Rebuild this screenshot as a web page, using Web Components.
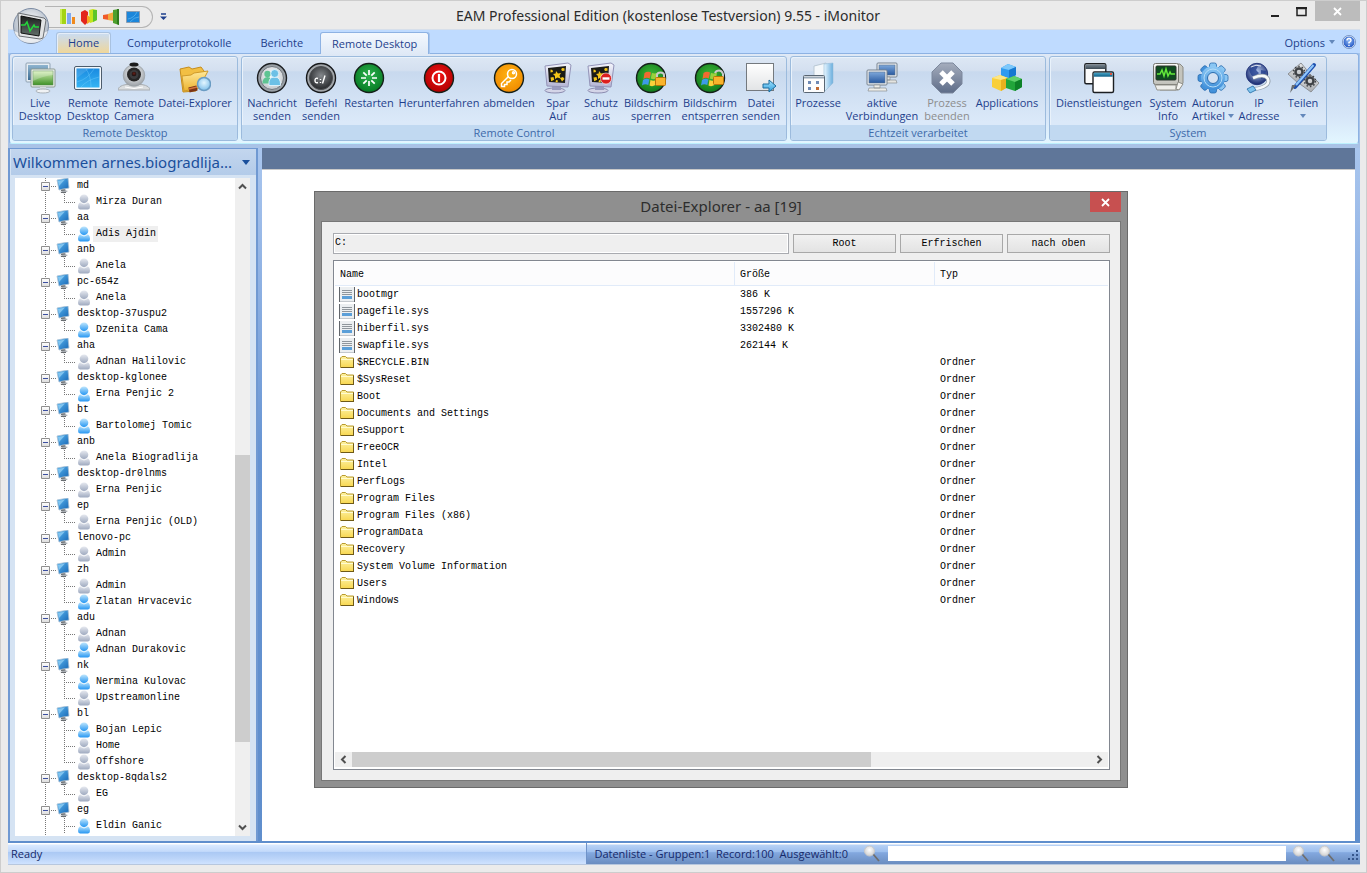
<!DOCTYPE html>
<html lang="de">
<head>
<meta charset="utf-8">
<title>EAM Professional Edition - iMonitor</title>
<style>
html, body { margin: 0; height: 100%; }
body { font: 11px/13px "Open Sans", "Noto Sans", sans-serif; color: #1e3f8c; background: #ebebeb; overflow: hidden; }
</style>
</head>
<body>
<app-window>
  <title-bar slot="title" text="EAM Professional Edition (kostenlose Testversion) 9.55 - iMonitor"></title-bar>
  <ribbon-tabs slot="tabs"></ribbon-tabs>
  <ribbon-bar slot="ribbon">
    <ribbon-group label="Remote Desktop">
      <ribbon-button icon="live" label="Live|Desktop" style="width:48px"></ribbon-button>
      <ribbon-button icon="rdesk" label="Remote|Desktop" style="width:48px"></ribbon-button>
      <ribbon-button icon="camera" label="Remote|Camera" style="width:44px"></ribbon-button>
      <ribbon-button icon="find" label="Datei-Explorer" style="width:78px"></ribbon-button>
    </ribbon-group>
    <ribbon-group label="Remote Control">
      <ribbon-button icon="msg" label="Nachricht|senden" style="width:54px"></ribbon-button>
      <ribbon-button icon="cmd" label="Befehl|senden" style="width:44px"></ribbon-button>
      <ribbon-button icon="restart" label="Restarten" style="width:52px"></ribbon-button>
      <ribbon-button icon="power" label="Herunterfahren" style="width:88px"></ribbon-button>
      <ribbon-button icon="key" label="abmelden" style="width:52px"></ribbon-button>
      <ribbon-button icon="saver" label="Spar|Auf" style="width:46px"></ribbon-button>
      <ribbon-button icon="saveroff" label="Schutz|aus" style="width:40px"></ribbon-button>
      <ribbon-button icon="lock" label="Bildschirm|sperren" style="width:60px"></ribbon-button>
      <ribbon-button icon="unlock" label="Bildschirm|entsperren" style="width:58px"></ribbon-button>
      <ribbon-button icon="send" label="Datei|senden" style="width:44px"></ribbon-button>
    </ribbon-group>
    <ribbon-group label="Echtzeit verarbeitet">
      <ribbon-button icon="proc" label="Prozesse" style="width:48px"></ribbon-button>
      <ribbon-button icon="net" label="aktive|Verbindungen" style="width:80px"></ribbon-button>
      <ribbon-button icon="stop" label="Prozess|beenden" disabled style="width:50px"></ribbon-button>
      <ribbon-button icon="apps" label="Applications" style="width:70px"></ribbon-button>
    </ribbon-group>
    <ribbon-group label="System">
      <ribbon-button icon="serv" label="Dienstleistungen" style="width:92px"></ribbon-button>
      <ribbon-button icon="info" label="System|Info" style="width:46px"></ribbon-button>
      <ribbon-button icon="gear" label="Autorun|Artikel" menu style="width:44px"></ribbon-button>
      <ribbon-button icon="ip" label="IP|Adresse" style="width:48px"></ribbon-button>
      <ribbon-button icon="share" label="Teilen|" menu style="width:40px"></ribbon-button>
    </ribbon-group>
  </ribbon-bar>
  <side-panel slot="side" heading="Wilkommen arnes.biogradlija..."></side-panel>
  <work-area slot="work">
    <file-dialog heading="Datei-Explorer - aa [19]"></file-dialog>
  </work-area>
  <status-bar slot="status"></status-bar>
</app-window>

<script>
const svg = (w, h, body, vb) => `<svg width="${w}" height="${h}" viewBox="${vb || `0 0 ${w} ${h}`}" aria-hidden="true">${body}</svg>`;
const lin = (id, a, b, dir = 'x2="0" y2="1"') => `<linearGradient id="${id}" x1="0" y1="0" ${dir}><stop offset="0" stop-color="${a}"/><stop offset="1" stop-color="${b}"/></linearGradient>`;
const rad = (id, a, b) => `<radialGradient id="${id}" cx=".5" cy=".4" r=".6"><stop offset="0" stop-color="${a}"/><stop offset="1" stop-color="${b}"/></radialGradient>`;
const disc = (a, b) => rad('g', a, b) + `<circle cx="16" cy="16" r="14.5" fill="url(#g)" stroke="#15201a" stroke-width="1.4"/>`;
const monitorStars = `${lin('m', '#f4f5fc', '#b4b4d4')}
  <ellipse cx="13" cy="28.500" rx="10" ry="2.500" fill="#d4d5e8" stroke="#8c8cb0"/><path d="M10 24h9v4h-9z" fill="#9a9cc0"/>
  <path d="M3 4l23-3 3 2-3 22-21-1z" fill="url(#m)" stroke="#9394b8"/><path d="M6 6l18-2-1 17-16-1z" fill="#1b1b16"/>
  <g fill="#f5c518"><path d="M14 9l2 2.500 3-.5-1.500 2.500 1 3-3-1-2.500 1.500v-3l-2-2 2.700-.5z"/><path d="M20 6l2.500.3v2.400l-2.500.3-.8-1.500zM8.500 7.500l2 .5.5 2-2.500.5zM8.500 15.500l3-.5.7 2.700-3 1.600zM18 16l3-1 1.500 2-2.500 2.500zM14 18l2 .5-.5 1.700h-2z"/></g>`;
const winFlag = `<path d="M9.500 11q3-2 6.500-.5l-1.300 6q-3.200-1.500-6.200.5z" fill="#f26a30"/><path d="M17 11q3 1 6-.5l-1 6q-3 1.500-6.200 0z" fill="#9ad13c"/><path d="M8 18q3-2 6.300-.5l-1 5.500q-3.300-1.500-6.300.5z" fill="#3e9ae8"/><path d="M15.500 18q3 1.500 6 0l-1 5q-3 2-6 .5z" fill="#fbd13a"/>`;
const screen = (x, y, w, h) => `<rect x="${x}" y="${y}" width="${w}" height="${h}" rx="1" fill="#eceff2" stroke="#76828e"/><rect x="${x + 2}" y="${y + 2}" width="${w - 4}" height="${h - 4}" fill="url(#s)" stroke="#5a7391" stroke-width=".6"/>`;

const ICONS = {
  live: lin('a', '#8fb4cf', '#3b6b92') + lin('b', '#d4efb4', '#3f9126') +
    `<rect x="2" y="1" width="24" height="19" rx="1" fill="#e6edf3" stroke="#8fa2b3"/><rect x="4" y="3" width="20" height="15" fill="url(#a)"/>
     <rect x="7" y="7" width="24" height="18" rx="1" fill="#eef2ee" stroke="#8c9a92"/><rect x="9" y="9" width="20" height="14" fill="url(#b)" stroke="#5c8d52" stroke-width=".6"/><path d="M9 9h20v4q-10 1-20 6z" fill="#fff" opacity=".25"/>
     <path d="M16 25h6v3h-6z" fill="#d6dade"/><ellipse cx="19" cy="29" rx="7" ry="2" fill="#f0f2f4" stroke="#aab2ba"/>`,
  rdesk: lin('a', '#1a8ae0', '#35b4f4') +
    `<rect x="2.500" y="4.500" width="27" height="23" rx="1.500" fill="#f4f8fb" stroke="#4d5c6c"/><rect x="4.500" y="6.500" width="23" height="19" fill="url(#a)"/>
     <path d="M5 20Q16 17 22 7M9 25Q15 18 27 15M19 25Q19 14 14 7" fill="none" stroke="#7fd3ff" opacity=".35"/><path d="M5 7h12L5 16z" fill="#fff" opacity=".12"/>`,
  camera: rad('a', '#ffffff', '#9aa0a6') + rad('b', '#6a2018', '#101010') +
    `<path d="M0 28q0-4 8-5.500h16q8 1.500 8 5.500z" fill="#d9dcde" stroke="#a9aeb2"/><path d="M7 25q9 3 18 0" stroke="#fff" fill="none"/><circle cx="16" cy="13.500" r="10.800" fill="url(#a)" stroke="#9aa0a5" stroke-width=".7"/>
     <circle cx="16" cy="12.500" r="7" fill="#262626"/><circle cx="16" cy="12.500" r="4.500" fill="#3b3b3d"/><circle cx="16" cy="12" r="2.300" fill="url(#b)"/><ellipse cx="16" cy="2.500" rx="4.500" ry="2" fill="#1b1b1b"/>`,
  find: lin('a', '#ffe999', '#edb32f') + rad('b', '#e4f6ff', '#7fc0ea') +
    `<path d="M1 7l9-2 3 2 9-2 3 4v4l-8 16-13 1z" fill="#f2bf43" stroke="#c58d1e"/><path d="M3 14l9-1 3-2 14-2-9 17-15 3z" fill="url(#a)" stroke="#cf9a2a"/>
     <path d="M10 28l8-2" stroke="#7b3516" stroke-width="5"/><path d="M10 27l8-2" stroke="#d3743a" stroke-width="1.500"/><circle cx="25" cy="22" r="6.500" fill="url(#b)" stroke="#6a9cc3" stroke-width="1.500"/>`,
  msg: rad('a', '#ffffff', '#c4c9cd') +
    `<circle cx="16" cy="16" r="14.500" fill="#9aa0a6" stroke="#1c1f22" stroke-width="1.400"/><circle cx="16" cy="16" r="11.500" fill="url(#a)" stroke="#6e757c"/>
     <g fill="#5ec492"><circle cx="11.500" cy="12" r="3.200"/><path d="M6.500 21.500q0-6.500 5-6.500t4.500 6.500z"/></g><g fill="#6cc0e6" stroke="#e9f8ff" stroke-width=".8"><path d="M13 23.500q-1-8.500 5.500-8.500t6 8.500z"/><circle cx="18.700" cy="11.500" r="4"/></g>`,
  cmd: rad('a', '#85898d', '#26282b') +
    `<circle cx="16" cy="16" r="14.500" fill="#a2a6aa" stroke="#16181a" stroke-width="1.400"/><circle cx="16" cy="16" r="11.500" fill="url(#a)" stroke="#4a4d50"/>
     <path d="M13 16.500q-3-1-3 2t3 2M15.500 17v1M15.500 20v1M17.500 21.500l2.500-8" stroke="#fff" stroke-width="1.400" fill="none"/>`,
  restart: disc('#2db14c', '#067a24') +
    `<g stroke="#fff" stroke-width="1.700"><path d="M16 8v5M16 19v5M8 16h5M19 16h5M10.300 10.300l3.400 3.400M18.300 18.300l3.400 3.400M21.700 10.300l-3.400 3.400M13.700 18.300l-3.400 3.400"/></g>`,
  power: disc('#f01414', '#b00000') + `<circle cx="16" cy="16" r="6.500" fill="none" stroke="#fff" stroke-width="2"/><path d="M16 12v8" stroke="#fff" stroke-width="2.200"/>`,
  key: disc('#ffb413', '#f08a00') +
    `<g fill="none" stroke="#fff" stroke-width="1.500"><circle cx="19" cy="12" r="4.500"/><circle cx="20.500" cy="10.800" r="1"/><path d="M15.500 14.500l-7 7v3h3v-2h2.500v-2.500h2l2-2"/></g>`,
  saver: monitorStars,
  saveroff: monitorStars + `<circle cx="21" cy="16.500" r="5.500" fill="#dd1f1f" stroke="#fff" stroke-width=".6"/><path d="M17.500 16.500h7" stroke="#fff" stroke-width="2.400"/>`,
  lock: disc('#3db838', '#117a1c') + winFlag + `<path d="M22 16v-3q0-2.500 3.500-2.500t3.500 2.500v3" fill="none" stroke="#c9c9c9" stroke-width="2"/><rect x="20.500" y="15.500" width="10" height="8" rx="1" fill="#f9b42c" stroke="#b87508"/>`,
  unlock: disc('#3db838', '#117a1c') + winFlag + `<path d="M21 11q1-2.500 4-2.500t4 3.500v4" fill="none" stroke="#c9c9c9" stroke-width="2"/><rect x="19.500" y="14.500" width="10" height="8" rx="1" fill="#f9b42c" stroke="#b87508"/>`,
  send: lin('a', '#ffffff', '#e2e4e6') + lin('b', '#a5e3ff', '#2f9fdd') +
    `<rect x="1.500" y="1.500" width="27" height="27" fill="url(#a)" stroke="#74797e"/><path d="M18 22h6v-4l7 6-7 6v-4h-6z" fill="url(#b)" stroke="#1c6c9e"/>`,
  proc: lin('a', '#e8f6ff', '#6aaede', 'x2="1" y2="0"') +
    `<path d="M12 4l12-3v24l-6 6-6-2z" fill="#f4f8fb" stroke="#b9c8d4"/><path d="M22 2l9-1v20l-9 9z" fill="url(#a)" stroke="#95bcd8" stroke-width=".6"/>
     <rect x="1.500" y="13.500" width="21" height="17" rx="1" fill="#fdfdfd" stroke="#596673"/><path d="M2 15.500h20" stroke="#9aa9b7" stroke-width="2"/><g fill="#6f8ab5"><path d="M6 19h3v3H6zM14 19h3v3h-3zM6 25h3v3H6z"/></g><path d="M14 25h3v3h-3z" fill="#c06a33"/>`,
  net: lin('s', '#7ea8db', '#2859a0') + screen(11, 1, 20, 14) +
    `<path d="M18 15h6v3h-6zM15 18h15l1 3H14z" fill="#e4e4e0" stroke="#8b8f92" stroke-width=".7"/>` + screen(1, 8, 20, 15) + `<path d="M8 23h6v3H8zM3 26h17l1 3H2z" fill="#eeeeea" stroke="#8b8f92" stroke-width=".7"/>`,
  stop: lin('a', '#a5adbd', '#5d6c88') + `<path d="M10 1h12l9 9v12l-9 9H10l-9-9V10z" fill="url(#a)" stroke="#7c889d"/><path d="M10 10l12 12M22 10L10 22" stroke="#fff" stroke-width="5"/>`,
  apps: `<path d="M10 6l7-4 8 3v8l-7 4-8-3z" fill="#2e9bf0"/><path d="M10 6l7-4 8 3-7 3z" fill="#7cc8fb"/><path d="M18 8l7-3v8l-7 4z" fill="#1778d0"/>
     <path d="M1 16l8-3 8 3v9l-7 4-9-4z" fill="#f9cf3a"/><path d="M1 16l8-3 8 3-7 2z" fill="#fde684"/><path d="M10 18l7-2v9l-7 4z" fill="#e8b11e"/>
     <path d="M15 17l8-3 8 3v8l-7 4-9-3z" fill="#21a53a"/><path d="M15 17l8-3 8 3-7 3z" fill="#5fd06c"/><path d="M24 20l7-3v8l-7 4z" fill="#0d8127"/>`,
  serv: lin('a', '#7a8894', '#3c4a55') + lin('b', '#4ca6c8', '#0b5f86') +
    `<rect x="1.800" y="1.800" width="21" height="20" rx="1.500" fill="#fbfbfb" stroke="#1c1f22" stroke-width="1.400"/><path d="M2.500 2.500h20V7h-20z" fill="url(#a)"/>
     <rect x="10" y="10" width="20.500" height="20.500" rx="1.500" fill="#fff" stroke="#1c1f22" stroke-width="1.400"/><path d="M10.700 10.700h19v4h-19z" fill="url(#b)"/><path d="M27 12h2" stroke="#e2543c" stroke-width="2"/>`,
  info: lin('a', '#fbfbf8', '#bfbfb8') +
    `<path d="M8 28h18l5-7V5l-3-3H6z" fill="#c4c4bd" stroke="#8b8b84"/><rect x="1.500" y="1.500" width="25" height="21" rx="2" fill="url(#a)" stroke="#74746e"/><rect x="4" y="4" width="20" height="14" rx="1" fill="#0f4a20" stroke="#26332a"/>
     <path d="M5 12h3l2-4 2 6 2-7 2 7 2-4 1 2h4" fill="none" stroke="#63e83a" stroke-width="1.500"/><path d="M3 23h21v5H5z" fill="#eeeeea" stroke="#96968f"/><path d="M26 20l5 2-4 6-3-1z" fill="#f5f5f2" stroke="#8e8e88"/>`,
  gear: lin('a', '#8fcaf5', '#3d8dd8') +
    `<g fill="url(#a)" stroke="#2a6cae" stroke-width=".8">${[0, 45, 90, 135].map(r => `<rect x="12.500" y="1" width="7" height="30" rx="2" transform="rotate(${r} 16 16)"/>`).join('')}</g><circle cx="16" cy="16" r="12" fill="url(#a)"/>
     <circle cx="16" cy="16" r="9" fill="none" stroke="#b4dcf8" stroke-width="1"/><circle cx="16" cy="16" r="5.500" fill="#d3e1f2" stroke="#2a6cae"/>`,
  ip: rad('a', '#b7cbf1', '#15286e') +
    `<circle cx="14" cy="12" r="10.700" fill="url(#a)" stroke="#26387c"/><path d="M6 7q5-5 9-3l-2 4 3 3-4 4q-5-1-6-8zM18 8l5 1-1 6-4 2z" fill="#24408f" opacity=".8"/><path d="M8 5q5-3 10-1" stroke="#fff" fill="none" opacity=".8"/>
     <path d="M10 16q12-5 15 1 2 5-5 8-5 2-9 2" fill="none" stroke="#8f9ba6" stroke-width="4"/><path d="M10 16q12-5 15 1 2 5-5 8-5 2-9 2" fill="none" stroke="#f6f9fb" stroke-width="2.600"/><path d="M4 27l6-3 3 4-6 3z" fill="#7fc4ef" stroke="#3c80b5"/>`,
  share: lin('a', '#e6e7e8', '#a9acb0') +
    `<path d="M1 12L14 1l5 6 3 9-11 5z" fill="url(#a)" stroke="#8d9094"/><path d="M13 22l10-10 9 9-8 9z" fill="url(#a)" stroke="#8d9094"/><g fill="none" stroke="#3f4246" stroke-width="2.500"><circle cx="12" cy="10" r="3.500"/><circle cx="23" cy="19" r="3.500"/></g><g fill="none" stroke="#3f4246" stroke-width="1.500" stroke-dasharray="1.500 2"><circle cx="12" cy="10" r="5.500"/><circle cx="23" cy="19" r="5.500"/></g>
     <path d="M27 3L8 25" stroke="#1d4fae" stroke-width="4" stroke-linecap="round"/><path d="M26.500 3L9 23" stroke="#8fc6fa" stroke-width="2"/><path d="M9 23l-6 8 2-8z" fill="#6a6d70"/>`
};
const ARROW = svg(6, 4, '<path d="M0 0h6L3 4z" fill="#6388bb"/>');
const MONITOR = svg(16, 16, lin('a', '#5ab7f0', '#1866b4', 'x2="1" y2="1"') + '<path d="M1 2l11-2 1 10-10 2z" fill="url(#a)" stroke="#a9c0d4" stroke-width=".8"/><path d="M2 3l7-1.500L3 8z" fill="#a9defc" opacity=".6"/><path d="M5 11l4-.5 1 2 2 .5-4 2.500-4-1.500 2-.8z" fill="#a9aeb3"/><path d="M5 12.500l4-.5M5 14.500h5" stroke="#6a6e72"/>');
const PERSON = on => svg(14, 16, (on ? lin('a', '#bfe6fd', '#2596f2') : lin('a', '#e6e9f0', '#9ea9bf')) + '<path d="M1 13q0-5 4-5h4q4 0 4 5 0 2-2 2.500H3Q1 15 1 13z" fill="url(#a)"/><circle cx="7" cy="4.800" r="4.300" fill="url(#a)"/><path d="M3.500 8.500q3.500 3 7 0" stroke="#fff" fill="none" opacity=".8"/>');
const FILE = svg(16, 16, '<path d="M0 0h16v15H0z" fill="#eceff1"/><path d="M0 0h1v15H0zM15 0h1v15h-1z" fill="#62666b"/><path d="M1 14h14v1H1z" fill="#c3c8cd"/><path d="M3 3h10v1H3zM3 5h10v1H3zM3 7h10v1H3z" fill="#8f969c"/><path d="M3 9h10v3H3z" fill="#5b9fd8"/>');
const FOLDER = svg(14, 14, lin('a', '#fdf2a4', '#f8d750') + '<path d="M.5 11.500V2L2 .5h3.500L7 2h6.500v9.500z" fill="url(#a)" stroke="#b99b2e"/><path d="M1 11.500h13M13.500 2.500v9" stroke="#6f5a18" fill="none"/><path d="M1 3.500h12" stroke="#fffbd0"/>');
const LENS = svg(18, 18, rad('a', '#ffffff', '#cfcfcf') + '<path d="M10 9l6 7" stroke="#6e6e6e" stroke-width="1.800"/><circle cx="6.500" cy="6" r="5" fill="url(#a)" stroke="#c9c9c9"/>');
const chevron = r => svg(9, 9, `<path d="M1 6.500L4.500 3L8 6.500" fill="none" stroke="#505050" stroke-width="2" transform="rotate(${r} 4.500 4.500)"/>`);

const define = (name, build, after) => customElements.define(name, class extends HTMLElement {
  connectedCallback() {
    if (this.shadowRoot) return;
    const root = this.attachShadow({ mode: 'open' });
    root.innerHTML = build(this);
    if (after) after(root, this);
  }
});
const BTN = 'button{font:inherit;color:inherit;background:none;border:0;padding:0;margin:0}svg{display:block}';

define('app-window', () => `<style>
  :host{display:grid;grid-template-rows:28px 24px auto 1fr 22px;height:100vh;box-sizing:border-box;border:1px solid #cdcdcd;padding:0 6px 7px 7px;background:#ebebeb}
  .body{display:grid;grid-template-columns:250px 1fr;gap:4px;min-height:0;padding:0 5px 2px 0;
    background:linear-gradient(180deg,#a9c6ee 0,#9dbce9 10%,#6593d2 45%,#5f8ecc 100%)}
  .body ::slotted(*){min-height:0;min-width:0}
  </style><slot name="title"></slot><slot name="tabs"></slot><slot name="ribbon"></slot>
  <div class="body"><slot name="side"></slot><slot name="work"></slot></div><slot name="status"></slot>`);

define('title-bar', el => `<style>${BTN}
  :host{display:grid;grid-template-columns:1fr auto;align-items:start;position:relative;color:#2b2b2b}
  .orb{position:absolute;left:4px;top:6px;z-index:2}
  .qat{grid-area:1/1;display:flex;align-items:center;gap:7px;margin:5px 0 0 37px}
  .pill{display:flex;align-items:center;gap:6px;height:20px;padding:0 11px 0 14px;border:1px solid #b4b4b4;border-left:0;border-radius:0 11px 11px 0}
  h1{grid-area:1/1/2/3;justify-self:center;margin:5px 32px 0 0;font:14px/20px "Noto Sans",sans-serif;white-space:nowrap}
  .win{grid-area:1/2;display:flex;align-items:flex-start}
  .win button{display:grid;place-items:center;width:27px;height:21px}
  .win .close{width:45px;height:20px;background:#bcbcbc}
  </style>
  <button class="orb" aria-label="Menü">${svg(38, 38, rad('o', '#fff', '#a9b4c2') + lin('c', '#1c1f1e', '#63706a') + `<circle cx="19" cy="19" r="17.500" fill="url(#o)" stroke="#7b8ba3"/><path d="M2 24q17 8 34 0-4 12-17 12T2 24z" fill="#fff" opacity=".7"/><path d="M6 6l26 5 2 2-3 18-3 1-21-3z" fill="#e2e4e5" stroke="#6b6f73"/><path d="M9 9l20 4-2 16-18-3z" fill="url(#c)" stroke="#111"/><path d="M9 18h4l2-3 3 9 4-6 1 2h4" fill="none" stroke="#23d43a" stroke-width="1.500"/>`)}</button>
  <div class="qat"><div class="pill">
    <button aria-label="Diagramm">${svg(16, 16, '<path d="M1 0h6v15H1z" fill="#a4d414"/><path d="M1 0h2v15H1z" fill="#c9ec53"/><path d="M8 4h4v11H8z" fill="#7fa9ef"/><path d="M13 8h3v7h-3z" fill="#f08a1d"/>')}</button>
    <button aria-label="Balken">${svg(16, 16, '<path d="M0 3l4-2 3 2v10l-3 3-4-4z" fill="#e3271c"/><path d="M6 6l3 2v5l-3 2z" fill="#f7a823"/><path d="M8 1l4-1 4 1v10l-4 2-3 1z" fill="#c2e41f"/><path d="M12 1l4 0v10l-4 2z" fill="#5bc52b"/>')}</button>
    <button aria-label="Bericht">${svg(16, 16, '<path d="M0 6l6-1v6l-6-1z" fill="#f05a28"/><path d="M5 5l6-2v9l-6-1z" fill="#f2a93c"/><path d="M10 1l6-1v16l-6-2z" fill="#4d9f2d"/><path d="M14 0h2v16l-2-1z" fill="#2f7a1c"/>')}</button>
    <button aria-label="Desktop">${svg(16, 14, '<path d="M1.500 1.500h13v11h-13z" fill="#1c86da" stroke="#8a9db2"/><path d="M3 9q6-1 9-7M5 12q4-5 9-5" stroke="#7accfa" opacity=".5" fill="none"/>')}</button>
  </div><button aria-label="Anpassen">${svg(7, 8, '<path d="M1 1h5" stroke="#1e3f8c" stroke-width="1.500"/><path d="M0 3.500h7L3.500 7z" fill="#1e3f8c"/>')}</button></div>
  <h1>${el.getAttribute('text')}</h1>
  <div class="win"><button aria-label="Minimieren">${svg(10, 10, '<path d="M1 8h8v2H1z" fill="#222"/>')}</button>
  <button aria-label="Maximieren">${svg(11, 10, '<path d="M1 1.500h9v7H1z" fill="none" stroke="#222" stroke-width="1.500"/><path d="M0 1h11" stroke="#222" stroke-width="2"/>')}</button>
  <button class="close" aria-label="Schließen">${svg(9, 9, '<path d="M1 1l7 7M8 1L1 8" stroke="#fff" stroke-width="1.800"/>')}</button></div>`);

define('ribbon-tabs', () => `<style>${BTN}
  :host{display:flex;align-items:flex-end;background:#bfdbff;padding:0 4px 0 48px;border-top:1px solid #d7dfea;box-sizing:border-box}
  nav{display:flex;flex:1;align-items:flex-end}
  a{color:inherit;text-decoration:none;box-sizing:border-box;height:21px;line-height:20px;padding:0 11px;border:1px solid transparent;border-bottom:0;border-radius:3px 3px 0 0;white-space:nowrap}
  .hot{background:linear-gradient(#c9dcf3,#dcd9c8 50%,#efd79b);border-color:#a9c2e0;margin-right:4px;box-shadow:inset 1px 1px 0 #e6eef8,inset -1px 0 0 #e6eef8}
  .plain{margin-right:4px}
  .narrow{padding:0 12px}
  .on{background:linear-gradient(#f3f8fe,#dfe9f6);border-color:#8db2e3;height:22px;line-height:21px;box-shadow:1px 0 0 #a6c4ec;position:relative;z-index:1;margin-bottom:-1px}
  .opt{display:flex;align-items:center;gap:4px;height:22px}
  .help{margin-left:3px}
  </style><nav><a class="hot" href="#">Home</a><a class="plain" href="#">Computerprotokolle</a><a class="plain narrow" href="#">Berichte</a><a class="on" href="#">Remote Desktop</a></nav>
  <div class="opt"><button>Options</button>${ARROW}<button class="help" aria-label="Hilfe">${svg(14, 14, rad('a', '#8db9f5', '#1b4fc0') + '<circle cx="7" cy="7" r="6" fill="url(#a)" stroke="#d8e4f4" stroke-width="1"/><circle cx="7" cy="7" r="6.600" fill="none" stroke="#6080b5" stroke-width=".7"/><path d="M5 5.500Q5 3.500 7 3.500t2 2Q9 6.500 7 7.500v1M7 9.700v1.300" stroke="#fff" stroke-width="1.400" fill="none"/>')}</button></div>`);

define('ribbon-bar', () => `<style>
  :host{display:block;background:linear-gradient(#a8c6ec,#a9c3e7)}
  div{display:flex;gap:3px;padding:2px 3px 2px 2px;margin:0 1px 4px 1px;border:1px solid #8db2e3;border-bottom-color:#bdf0fd;border-radius:3px;box-sizing:border-box;height:91px;
   background:linear-gradient(#dfe9f6 0,#d3e0f1 18%,#c8d9ee 20%,#d6e6f8 70%,#e3f6ff 100%)}
  </style><div><slot></slot></div>`);

define('ribbon-group', el => `<style>
  :host{display:flex;flex-direction:column;border:1px solid #9cbbdd;border-radius:3px;box-shadow:inset 1px 1px 0 #e9f2fb;background:linear-gradient(#dde7f4 0,#d4e0f0 16%,#c8d9ee 18%,#dbe9f9 78%,#dbe9f9 100%)}
  .row{display:flex;flex:1;padding:5px 3px 0}
  .cap{height:15px;line-height:15px;text-align:center;color:#3e6aaa;background:#c1d9f1;border-radius:0 0 2px 2px}
  </style><div class="row"><slot></slot></div><div class="cap">${el.getAttribute('label')}</div>`);

define('ribbon-button', el => {
  const [a, b] = el.getAttribute('label').split('|');
  const menu = el.hasAttribute('menu');
  return `<style>${BTN}
  :host{display:block}
  button{display:flex;flex-direction:column;align-items:center;gap:2px;width:100%;height:100%}
  button:disabled{color:#8d8d8d}
  .l{display:flex;flex-direction:column;align-items:center;white-space:nowrap}
  .b{display:flex;align-items:center;gap:3px;min-height:13px}
  </style><button ${el.hasAttribute('disabled') ? 'disabled' : ''}>${svg(32, 32, ICONS[el.getAttribute('icon')])}
  <span class="l"><span>${a}</span>${b !== undefined ? `<span class="b">${b ? `<span>${b}</span>` : ''}${menu ? ARROW : ''}</span>` : ''}</span></button>`;
});

define('scroll-bar', el => {
  const v = el.hasAttribute('vertical');
  return `<style>${BTN}
  :host{display:flex;flex-direction:${v ? 'column' : 'row'};background:#efefef}
  button{display:grid;place-items:center;flex:0 0 17px}
  .track{flex:1;display:flex;flex-direction:${v ? 'column' : 'row'};min-height:0}
  .pre{flex:${el.getAttribute('before')} 1 0}.thumb{flex:${el.getAttribute('size')} 1 0;background:#cdcdcd}.post{flex:${el.getAttribute('after')} 1 0}
  </style><button aria-label="Zurück">${chevron(v ? 0 : -90)}</button><div class="track"><div class="pre"></div><div class="thumb"></div><div class="post"></div></div><button aria-label="Weiter">${chevron(v ? 180 : 90)}</button>`;
});

define('tree-user', el => `<style>
  :host{display:flex;align-items:center;height:16px;padding-left:62px;position:relative;
    background:repeating-linear-gradient(#777 0 1px,transparent 1px 2px) 49px 0/1px var(--stem,16px) no-repeat,
      repeating-linear-gradient(90deg,#777 0 1px,transparent 1px 2px) 49px 8px/12px 1px no-repeat}
  svg{display:block}
  span{margin-left:2px;padding:0 2px 0 3px;line-height:16px;white-space:pre}
  :host([selected]) span{background:#efefef}
  </style>${PERSON(el.hasAttribute('online'))}<span>${el.getAttribute('name')}</span>`);

define('tree-group', el => `<style>${BTN}
  :host{display:block}
  header{display:flex;align-items:center;height:16px;padding-left:26px}
  .dots{width:6px;height:1px;margin-top:1px;background:repeating-linear-gradient(90deg,transparent 0 1px,#777 1px 2px)}
  span{margin-left:5px;line-height:16px;white-space:pre}
  ::slotted(tree-user:last-child:not([continued])){--stem:8px}
  </style><header><button aria-label="Einklappen">${svg(9, 9, lin('e', '#fff', '#dcdcdc') + '<path d="M.5.5h8v8h-8z" fill="url(#e)" stroke="#8f8f8f"/><path d="M2 4.500h5" stroke="#3c4fa0"/>')}</button><i class="dots"></i>${MONITOR}<span>${el.getAttribute('name')}</span></header><slot></slot>`);

const TREE = [
  ['md', 'Mirza Duran'], ['aa', '*Adis Ajdin!'], ['anb', 'Anela'], ['pc-654z', 'Anela'], ['desktop-37uspu2', '*Dzenita Cama'],
  ['aha', 'Adnan Halilovic'], ['desktop-kglonee', '*Erna Penjic 2'], ['bt', '*Bartolomej Tomic'], ['anb', 'Anela Biogradlija'],
  ['desktop-dr0lnms', 'Erna Penjic'], ['ep', 'Erna Penjic (OLD)'], ['lenovo-pc', 'Admin'], ['zh', 'Admin', '*Zlatan Hrvacevic'],
  ['adu', 'Adnan', '*Adnan Durakovic'], ['nk', '*Nermina Kulovac', 'Upstreamonline'], ['bl', '*Bojan Lepic', 'Home', 'Offshore'],
  ['desktop-8qdals2', 'EG'], ['eg', '*Eldin Ganic+']
];
define('side-panel', el => `<style>${BTN}
  :host{display:flex;flex-direction:column;box-sizing:border-box;border:solid #7099d2;border-width:1px 2px 0 2px;background:#d5e3f3}
  header{display:flex;align-items:center;justify-content:space-between;height:26px;margin:0 0 3px 1px;padding:0 6px 0 2px;background:linear-gradient(#c3d6ee,#b3cbe9);box-sizing:border-box}
  h2{margin:0;font:15px/24px "Noto Sans",sans-serif;color:#1a4f9c;white-space:nowrap}
  .box{display:grid;grid-template-columns:1fr 15px;flex:1;min-height:0;margin:0 6px 5px 5px;background:#fff}
  .tree{overflow:hidden;font:10px/16px "Liberation Mono",monospace;color:#000;
    background:repeating-linear-gradient(#777 0 1px,transparent 1px 2px) 30px 0/1px 100% no-repeat}
  </style><header><h2>${el.getAttribute('heading')}</h2><button aria-label="Menü">${svg(8, 5, '<path d="M0 0h8L4 5z" fill="#1a4f9c"/>')}</button></header>
  <div class="box"><div class="tree">${TREE.map(([g, ...u]) => `<tree-group name="${g}">${u.map(n =>
    `<tree-user name="${n.replace(/[*!+]/g, '')}" ${n[0] === '*' ? 'online' : ''} ${n.endsWith('!') ? 'selected' : ''} ${n.endsWith('+') ? 'continued' : ''}></tree-user>`).join('')}</tree-group>`).join('')}</div>
  <scroll-bar vertical before="260" size="287" after="77"></scroll-bar></div>`);

define('work-area', () => `<style>
  :host{display:flex;flex-direction:column;position:relative;background:#fff}
  .top{height:21px;background:#5f7699;border-bottom:1px solid #c9c9c9}
  ::slotted(file-dialog){position:absolute;left:52px;top:43px}
  </style><div class="top"></div><slot></slot>`);

const FILES = [['bootmgr', '386 K'], ['pagefile.sys', '1557296 K'], ['hiberfil.sys', '3302480 K'], ['swapfile.sys', '262144 K'],
  ...['$RECYCLE.BIN', '$SysReset', 'Boot', 'Documents and Settings', 'eSupport', 'FreeOCR', 'Intel', 'PerfLogs', 'Program Files', 'Program Files (x86)', 'ProgramData', 'Recovery', 'System Volume Information', 'Users', 'Windows'].map(n => [n, '', 'Ordner'])];
define('file-dialog', el => `<style>${BTN}
  :host{display:flex;flex-direction:column;box-sizing:border-box;width:814px;height:597px;border:1px solid #6a6a6a;background:#8f8f8f;padding:0 6px 6px;color:#000;font:10px/17px "Liberation Mono",monospace}
  header{display:grid;grid-template-columns:1fr auto;height:29px}
  h2{grid-area:1/1/2/3;justify-self:center;margin:4px 0 0;font:15px/21px "Noto Sans",sans-serif;color:#2d2d2d}
  header button{grid-area:1/2;display:grid;place-items:center;width:31px;height:20px;background:#c75050}
  .body{flex:1;display:flex;flex-direction:column;gap:6px;min-height:0;padding:11px 10px 10px 11px;border:1px solid #777;background:#efefef}
  .bar{display:grid;grid-template-columns:1fr 103px 103px 103px;column-gap:4px;align-items:center}
  .bar input{min-width:0;box-sizing:border-box;height:21px;margin:0;padding:0 1px 2px;border:1px solid #a9abb0;box-shadow:inset 0 0 0 1px #fff;background:#efefef;font:inherit;color:inherit;outline:0}
  .bar button{height:19px;box-sizing:border-box;border:1px solid #a8a8a8;background:linear-gradient(#f1f1f1,#e3e3e3);line-height:17px}
  .list{flex:1;display:flex;flex-direction:column;min-height:0;padding:1px 1px 2px;border:1px solid #828790;background:#fff}
  .rows{flex:1;min-height:0;overflow:hidden}
  table{width:100%;table-layout:fixed;border-spacing:0}
  th{height:21px;padding:2px 0 0 5px;font-weight:400;text-align:left;background:#fcfcfd;border-bottom:1px solid #e1ebf9}
  th:not(:last-child){border-right:1px solid #e1ebf9}
  td{height:17px;padding:0 0 0 5px;line-height:17px;white-space:pre}
  td div{display:flex;align-items:center;height:17px}
  td i{display:flex;width:17px}
  td.f div{margin-left:-1px}
  td.f i{width:18px}
  scroll-bar{height:15px}
  </style><header><h2>${el.getAttribute('heading')}</h2><button aria-label="Schließen">${svg(9, 9, '<path d="M1 1l7 7M8 1L1 8" stroke="#fff" stroke-width="1.800"/>')}</button></header>
  <div class="body"><div class="bar"><input value="C:" readonly aria-label="Pfad"><button>Root</button><button>Erfrischen</button><button>nach oben</button></div>
  <div class="list"><div class="rows"><table><colgroup><col style="width:400px"><col style="width:200px"><col></colgroup><thead><tr><th>Name</th><th>Größe</th><th>Typ</th></tr></thead>
  <tbody>${FILES.map(([n, s, t]) => `<tr><td class="${t ? '' : 'f'}"><div><i>${t ? FOLDER : FILE}</i>${n}</div></td><td>${s}</td><td>${t || ''}</td></tr>`).join('')}</tbody></table></div>
  <scroll-bar before="0" size="519" after="220"></scroll-bar></div></div>`);

define('status-bar', () => `<style>${BTN}
  :host{display:grid;grid-template-columns:3fr 4fr;color:#15296a;border-bottom:1px solid #b7c7de;box-sizing:border-box}
  div{display:flex;align-items:center}
  .l{padding-left:3px;border-right:1px solid #6f93c9;background:linear-gradient(#fff 0 1px,#d9e9ff 2px,#c3dafb 40%,#abc9f4 45%,#bcd5f9 75%,#cfe2ff)}
  .r{padding-left:7px;background:linear-gradient(#fff 0 1px,#b7d1f5 2px,#9dbfee 42%,#83a8df 46%,#6b8dc0);white-space:pre}
  input{flex:1;min-width:0;height:15px;box-sizing:border-box;border:0;margin:0 6px 0 7px;padding:0 2px;background:#fff;font:inherit;outline:0}
  .lens{margin-left:15px}
  .end{margin-left:8px}
  .grip{align-self:flex-end;margin:0 1px 3px 12px}
  </style><div class="l">Ready</div><div class="r"><span>Datenliste - Gruppen:1  Record:100  Ausgewählt:0</span><button class="lens" aria-label="Suchen">${LENS}</button><input aria-label="Suche"><button aria-label="Weitersuchen">${LENS}</button><button class="end" aria-label="Zurücksuchen">${LENS}</button>
  <span class="grip">${svg(11, 11, '<path d="M8 0h2v2H8zM4 4h2v2H4zM8 4h2v2H8zM0 8h2v2H0zM4 8h2v2H4zM8 8h2v2H8z" fill="#34558c"/>')}</span></div>`);
</script>
</body>
</html>
